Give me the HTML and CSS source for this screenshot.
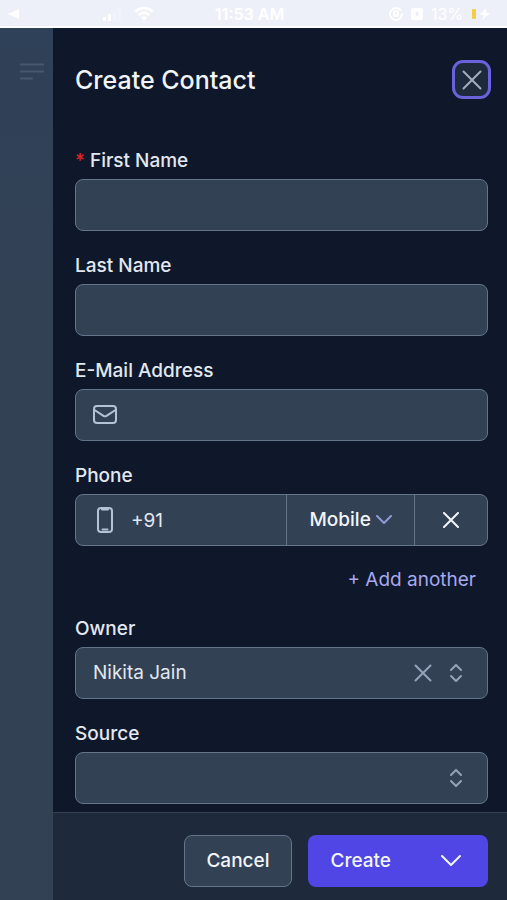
FILE: index.html
```html
<!DOCTYPE html>
<html lang="en">
<head>
<meta charset="utf-8">
<meta name="viewport" content="width=device-width, initial-scale=1">
<title>Create Contact</title>
<link rel="stylesheet" href="styles.css">
</head>
<body>
    <div class="status-bar">
        <div class="status-left">
            <svg class="status-back" width="12" height="12" viewBox="0 0 12 12"><path d="M0 6 11 1v10z"/></svg>
            <svg width="18" height="14" viewBox="0 0 18 14"><path d="M0 10h3v4H0zM5 7h3v7H5z"/><path class="faint" d="M10 4h3v10h-3zM15 1h3v13h-3z"/></svg>
            <svg width="20" height="14" viewBox="0 0 20 14"><path d="M10 14 6.800 10.500a4.500 4.500 0 0 1 6.400 0zM5.500 9 3.500 7a9.200 9.200 0 0 1 13 0l-2 2a6.400 6.400 0 0 0-9 0zM2.300 5.700.4 3.800a13.600 13.600 0 0 1 19.200 0l-1.900 1.900a10.900 10.900 0 0 0-15.400 0z"/></svg>
        </div>
        <span class="status-time">11:53 AM</span>
        <div class="status-right">
            <svg width="14" height="14" viewBox="0 0 14 14"><path class="line" d="M11.500 3A6 6 0 1 0 13 7M5 8V6a2 2 0 0 1 4 0v2"/><path d="M4.500 7h5v3h-5z"/></svg>
            <svg width="12" height="12" viewBox="0 0 12 12"><path fill-rule="evenodd" d="M2 0h8a2 2 0 0 1 2 2v8a2 2 0 0 1-2 2H2a2 2 0 0 1-2-2V2a2 2 0 0 1 2-2zM4.500 4v4h3V4z"/></svg>
            <span class="status-battery">13%</span>
            <svg width="20" height="14" viewBox="0 0 20 14"><rect class="charge" x="1" y="2" width="4" height="10" rx="1"/><path d="m15 1-6 7h4l-2 5 8-7h-4z"/></svg>
        </div>
    </div>

    <div class="page">
        <div class="backdrop">
            <button type="button" class="menu-button" aria-label="Open menu">
                <svg width="24" height="18" viewBox="0 0 24 18"><path d="M0 1.500h24M0 8.500h24M0 15.500h12"/></svg>
            </button>
        </div>

        <form class="panel">
            <div class="panel-body">
                <div class="panel-header">
                    <h1>Create Contact</h1>
                    <button type="button" class="close-button" aria-label="Close">
                        <svg width="20" height="20" viewBox="0 0 20 20"><path d="m1.500 1.500 17 17M18.500 1.500l-17 17"/></svg>
                    </button>
                </div>

                <div class="field">
                    <label for="first_name"><span class="required">*</span> First Name</label>
                    <input class="control" id="first_name" type="text" required>
                </div>

                <div class="field">
                    <label for="last_name">Last Name</label>
                    <input class="control" id="last_name" type="text">
                </div>

                <div class="field">
                    <label for="email">E-Mail Address</label>
                    <div class="control">
                        <svg class="field-icon" width="24" height="24" viewBox="0 0 24 24"><rect x="1" y="3" width="22" height="17" rx="3"/><path d="m1.500 7 9 5.800a3 3 0 0 0 3 0l9-5.800"/></svg>
                        <input id="email" type="email">
                    </div>
                </div>

                <div class="field">
                    <label for="phone">Phone</label>
                    <div class="control phone">
                        <svg class="field-icon" width="24" height="26" viewBox="0 0 24 26"><rect x="5" y="1" width="14" height="24" rx="3"/><path d="M9 1.500v1h6v-1M9.500 22.500h5"/></svg>
                        <input id="phone" type="tel" value="+91">
                        <div class="phone-type">
                            <select aria-label="Phone type">
                                <option>Mobile</option>
                            </select>
                            <svg width="16" height="10" viewBox="0 0 16 10"><path d="m1 1 7 7 7-7"/></svg>
                        </div>
                        <button type="button" class="phone-remove" aria-label="Remove phone">
                            <svg width="16" height="16" viewBox="0 0 16 16"><path d="m1 1 14 14M15 1 1 15"/></svg>
                        </button>
                    </div>
                    <button type="button" class="add-another">+ Add another</button>
                </div>

                <div class="field">
                    <label for="owner">Owner</label>
                    <div class="control">
                        <select id="owner">
                            <option>Nikita Jain</option>
                        </select>
                        <button type="button" class="clear-button" aria-label="Clear owner">
                            <svg width="18" height="18" viewBox="0 0 18 18"><path d="m1.500 1.500 15 15M16.500 1.500l-15 15"/></svg>
                        </button>
                        <svg class="updown" width="12" height="18" viewBox="0 0 12 18"><path d="m1 6 5-5 5 5M1 12l5 5 5-5"/></svg>
                    </div>
                </div>

                <div class="field">
                    <label for="source">Source</label>
                    <div class="control">
                        <select id="source">
                            <option></option>
                        </select>
                        <svg class="updown" width="12" height="18" viewBox="0 0 12 18"><path d="m1 6 5-5 5 5M1 12l5 5 5-5"/></svg>
                    </div>
                </div>
            </div>

            <div class="panel-footer">
                <button type="button" class="button">Cancel</button>
                <div class="split-button">
                    <button type="submit" class="button primary">Create</button>
                    <button type="button" class="button primary more" aria-label="More create options">
                        <svg width="20" height="12" viewBox="0 0 20 12"><path d="m1 1 9 9 9-9"/></svg>
                    </button>
                </div>
            </div>
        </form>
    </div>
</body>
</html>
```
FILE: styles.css
```css
* {
  box-sizing: border-box;
}
body {
  display: flex;
  flex-direction: column;
  min-height: 100vh;
  margin: 0;
  background: #0f172a;
  color: #e2e8f0;
  font: 19px/24px Inter, "Liberation Sans", sans-serif;
}
button, input, select {
  margin: 0;
  padding: 0;
  border: 0;
  background: none;
  color: inherit;
  font: inherit;
}
button {
  cursor: pointer;
}
svg {
  display: block;
  flex: none;
  fill: none;
  stroke: currentColor;
  stroke-width: 2;
  stroke-linecap: round;
  stroke-linejoin: round;
}

/* status bar */
.status-bar {
  display: grid;
  grid-template-columns: 1fr auto 1fr;
  align-items: center;
  height: 28px;
  padding: 2px 16px 0 8px;
  background: #eef0f9;
  border-bottom: 2px solid #fff;
  color: #fff;
  font-size: 16px;
  font-weight: 600;
}
.status-bar svg {
  fill: #fff;
  stroke: none;
}
.status-bar .faint {
  opacity: 0.2;
}
.status-bar .line {
  fill: none;
  stroke: #fff;
}
.status-bar .charge {
  fill: #f2d046;
}
.status-left, .status-right {
  display: flex;
  align-items: center;
  gap: 12px;
}
.status-left {
  gap: 13px;
  padding-right: 61px;
}
.status-back {
  margin-right: auto;
}
.status-right {
  justify-content: flex-end;
  gap: 8px;
}
.status-battery {
  font-weight: 400;
}

.page {
  display: flex;
  flex: 1;
}
.backdrop {
  width: 53px;
  flex: none;
  padding: 35px 9px 0 20px;
  background: linear-gradient(#2f4158, #334155 30%);
}
.menu-button svg {
  color: #46586f;
}

/* panel */
.panel {
  display: flex;
  flex: 1;
  flex-direction: column;
  min-width: 0;
}
.panel-body {
  display: flex;
  flex: 1;
  flex-direction: column;
  gap: 23px;
  padding: 32px 19px 8px 22px;
}
.panel-header {
  display: flex;
  align-items: center;
  justify-content: space-between;
  margin: 0 -3px 27px 0;
}
h1 {
  margin: 0;
  color: #f1f5f9;
  font-size: 25px;
  font-weight: 500;
  line-height: 32px;
}
.close-button {
  display: grid;
  place-items: center;
  width: 39px;
  height: 39px;
  border: 3px solid #6a62dc;
  border-radius: 11px;
  background: #1e293b;
  color: #a3aec0;
}
.field {
  display: flex;
  flex-direction: column;
  gap: 6px;
}
.field label {
  font-weight: 500;
}
.required {
  color: #dc2626;
}
.control {
  display: flex;
  align-items: center;
  width: 100%;
  height: 52px;
  padding: 0 17px;
  border: 1px solid #64748b;
  border-radius: 8px;
  background: #334155;
}
.control input, .control select {
  flex: 1;
  width: 100%;
  min-width: 0;
  height: 100%;
  outline: 0;
}
.control select {
  appearance: none;
}
.field-icon {
  margin-right: 14px;
  color: #b4c3d6;
}
.phone {
  padding-right: 0;
}
.phone-type {
  display: flex;
  align-items: center;
  justify-content: center;
  gap: 4px;
  width: 128px;
  height: 100%;
  border-left: 1px solid #64748b;
  color: #f1f5f9;
  font-weight: 500;
}
.control .phone-type select {
  flex: none;
  width: auto;
}
.phone-type svg {
  color: #8f9bd6;
}
.phone-remove {
  display: grid;
  place-items: center;
  width: 73px;
  height: 100%;
  border-left: 1px solid #64748b;
  color: #f1f5f9;
}
.add-another {
  align-self: flex-end;
  margin: 16px 12px 2px 0;
  color: #a5a9ee;
}
.clear-button {
  margin-right: 18px;
  color: #94a3b8;
}
.updown {
  margin-right: 8px;
  color: #94a3b8;
}

/* footer */
.panel-footer {
  display: flex;
  justify-content: flex-end;
  gap: 16px;
  padding: 22px 19px 13px;
  border-top: 1px solid #334155;
  background: #1e293b;
}
.button {
  height: 52px;
  padding: 0 21px;
  border: 1px solid #64748b;
  border-radius: 8px;
  background: #334155;
  color: #f1f5f9;
  font-weight: 500;
}
.split-button {
  display: flex;
  overflow: hidden;
  border-radius: 8px;
}
.split-button .button {
  padding: 0 23px;
  border: 0;
  border-radius: 0;
  background: #4f46e5;
}
.split-button .more {
  padding: 0 27px;
}
```
